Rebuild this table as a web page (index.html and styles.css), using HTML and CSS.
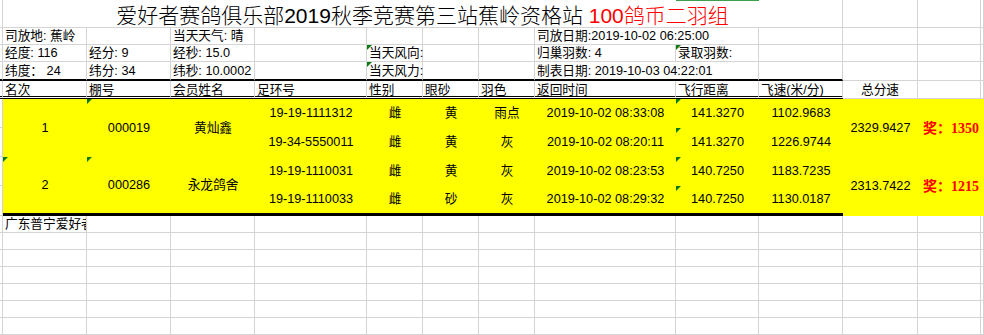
FILE: index.html
```html
<!DOCTYPE html>
<html lang="zh-CN">
<head>
<meta charset="utf-8">
<title>赛鸽成绩表</title>
<link rel="stylesheet" href="styles.css">
</head>
<body>
<div class="sheet">
  <div class="sel"></div>

  <div class="rh"></div>
  <div class="title s10">爱好者赛鸽俱乐部2019秋季竞赛第三站蕉岭资格站 <span class="red">100鸽币二羽组</span></div>
  <div></div><div></div><div></div>

  <div class="rh"></div>
  <div class="t">司放地: 蕉岭</div>
  <div></div>
  <div class="t">当天天气: 晴</div>
  <div></div><div></div><div></div><div></div>
  <div class="t s2">司放日期:2019-10-02 06:25:00</div>
  <div></div><div></div><div></div><div></div>

  <div class="rh"></div>
  <div class="t">经度: 116</div>
  <div class="t">经分: 9</div>
  <div class="t">经秒: 15.0</div>
  <div></div>
  <div class="t tri">当天风向:</div>
  <div></div><div></div>
  <div class="t">归巢羽数: 4</div>
  <div class="t tri">录取羽数:</div>
  <div></div><div></div><div></div><div></div>

  <div class="rh k2"></div>
  <div class="t k2">纬度： 24</div>
  <div class="t k2">纬分: 34</div>
  <div class="t k2">纬秒: 10.0002</div>
  <div class="k2"></div>
  <div class="t tri k2">当天风力:</div>
  <div class="k2"></div><div class="k2"></div>
  <div class="t s2 k2">制表日期: 2019-10-03 04:22:01</div>
  <div class="k2"></div>
  <div></div><div></div><div></div>

  <div class="rh k3"></div>
  <div class="h k3">名次</div>
  <div class="h k3">棚号</div>
  <div class="h k3">会员姓名</div>
  <div class="h k3">足环号</div>
  <div class="h k3">性别</div>
  <div class="h k3">眼砂</div>
  <div class="h k3">羽色</div>
  <div class="h k3">返回时间</div>
  <div class="h k3">飞行距离</div>
  <div class="h k3">飞速(米/分)</div>
  <div class="h hc">总分速</div>
  <div></div><div></div>

  <div class="rh"></div>
  <div class="y r2">1</div>
  <div class="y r2 tri">000019</div>
  <div class="y r2">黄灿鑫</div>
  <div class="y">19-19-1111312</div>
  <div class="y">雌</div>
  <div class="y">黄</div>
  <div class="y">雨点</div>
  <div class="y">2019-10-02 08:33:08</div>
  <div class="y tri">141.3270</div>
  <div class="y">1102.9683</div>
  <div class="y r2">2329.9427</div>
  <div class="y r2 s2 prize">奖：1350</div>

  <div class="rh"></div>
  <div class="y">19-34-5550011</div>
  <div class="y">雌</div>
  <div class="y">黄</div>
  <div class="y">灰</div>
  <div class="y">2019-10-02 08:20:11</div>
  <div class="y tri">141.3270</div>
  <div class="y">1226.9744</div>

  <div class="rh"></div>
  <div class="y r2 tri k3b">2</div>
  <div class="y r2 tri k3b">000286</div>
  <div class="y r2 k3b">永龙鸽舍</div>
  <div class="y">19-19-1110031</div>
  <div class="y">雌</div>
  <div class="y">黄</div>
  <div class="y">灰</div>
  <div class="y">2019-10-02 08:23:53</div>
  <div class="y tri">140.7250</div>
  <div class="y">1183.7235</div>
  <div class="y r2">2313.7422</div>
  <div class="y r2 s2 prize">奖：1215</div>

  <div class="rh"></div>
  <div class="y k3b">19-19-1110033</div>
  <div class="y k3b">雌</div>
  <div class="y k3b">砂</div>
  <div class="y k3b">灰</div>
  <div class="y k3b">2019-10-02 08:29:32</div>
  <div class="y tri k3b">140.7250</div>
  <div class="y k3b">1130.0187</div>

  <div class="rh"></div>
  <div class="t clip">广东普宁爱好者赛鸽俱乐部</div>
  <div></div><div></div><div></div><div></div><div></div><div></div><div></div><div></div><div></div><div></div><div></div><div></div>

  <div class="rh"></div>
  <div></div><div></div><div></div><div></div><div></div><div></div><div></div><div></div><div></div><div></div><div></div><div></div><div></div>

  <div class="rh"></div>
  <div></div><div></div><div></div><div></div><div></div><div></div><div></div><div></div><div></div><div></div><div></div><div></div><div></div>

  <div class="rh"></div>
  <div></div><div></div><div></div><div></div><div></div><div></div><div></div><div></div><div></div><div></div><div></div><div></div><div></div>

  <div class="rh"></div>
  <div></div><div></div><div></div><div></div><div></div><div></div><div></div><div></div><div></div><div></div><div></div><div></div><div></div>

  <div class="rh"></div>
  <div></div><div></div><div></div><div></div><div></div><div></div><div></div><div></div><div></div><div></div><div></div><div></div><div></div>

  <div class="rh"></div>
  <div></div><div></div><div></div><div></div><div></div><div></div><div></div><div></div><div></div><div></div><div></div><div></div><div></div>
</div>
</body>
</html>
```

FILE: styles.css
```css
html, body {
  margin: 0;
  padding: 0;
  background: #ffffff;
}

body {
  font-family: "Liberation Sans", "Noto Sans CJK SC", sans-serif;
  font-size: 12.7px;
  color: #000000;
}

.sheet {
  position: relative;
  display: grid;
  grid-template-columns: 3px 84px 84px 84px 112px 56px 56px 56px 141px 83px 84px 75px 63px 3px;
  grid-template-rows: 28px 17px 17px 19px 18px 29px 29px 29px 30px repeat(7, 17px);
  width: 984px;
  height: 335px;
  overflow: hidden;
}

.sheet > div {
  box-sizing: border-box;
  border-right: 1px solid #d4d4d4;
  border-bottom: 1px solid #d4d4d4;
  white-space: nowrap;
  display: flex;
  align-items: flex-end;
  line-height: 15px;
  min-width: 0;
  padding: 0;
}

.sheet > .sel {
  position: absolute;
  top: 0;
  left: 676px;
  width: 83px;
  height: 1px;
  border: 0;
  background: #3c9f4c;
  z-index: 2;
}

.s2 { grid-column: span 2; }
.s10 { grid-column: span 10; }
.r2 { grid-row: span 2; }

.sheet > .title {
  display: block;
  text-align: center;
  font-size: 21px;
  line-height: 21px;
  font-weight: 300;
  padding-top: 5px;
}

.red { color: #ff0000; }

.sheet > .t { padding-left: 2px; }

.sheet > .clip { overflow: hidden; }

.sheet > .h {
  display: block;
  overflow: hidden;
  padding: 2px 0 0 2px;
  line-height: 15px;
}

.sheet > .hc {
  text-align: center;
  padding-left: 0;
}

.sheet > .k2 { border-bottom: 2px solid #000000; }
.sheet > .k3 { border-bottom: 3px double #000000; }

.sheet > .y {
  background: #ffff00;
  border-right: 0;
  border-bottom: 0;
  justify-content: center;
  align-items: center;
}

.sheet > .k3b { border-bottom: 3px solid #000000; }

.sheet > .prize {
  color: #ff0000;
  font-family: "Liberation Serif", "Noto Sans CJK SC", serif;
  font-weight: bold;
  font-size: 14px;
}

.tri { position: relative; }

.tri::before {
  content: "";
  position: absolute;
  left: 0;
  top: 0;
  width: 0;
  height: 0;
  border-top: 5px solid #0b7a12;
  border-right: 5px solid transparent;
}
```
